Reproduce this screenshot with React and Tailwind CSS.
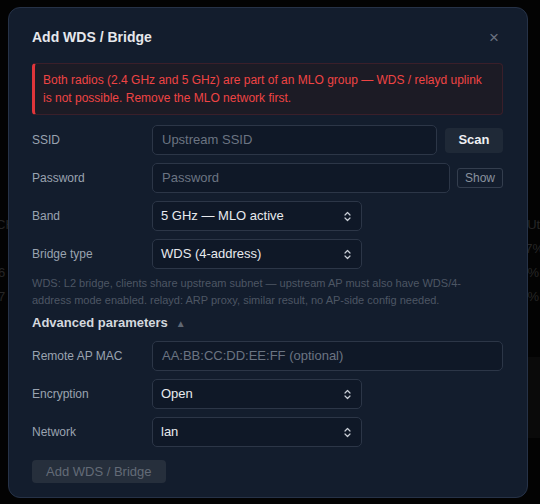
import React from "react";

const font = { fontFamily: '"Liberation Sans", Arial, sans-serif' };

function Chevrons() {
  return (
    <svg width="7" height="11" viewBox="0 0 7 11" fill="none" stroke="#c9ced6" strokeWidth="1.2" strokeLinecap="round" strokeLinejoin="round">
      <path d="M1 4 L3.5 1.5 L6 4" />
      <path d="M1 7 L3.5 9.5 L6 7" />
    </svg>
  );
}

function Label({ children }) {
  return <div className="w-[120px] shrink-0 text-[12px] text-[#9aa3b0]">{children}</div>;
}

function Input({ placeholder, className = "" }) {
  return (
    <div className={"h-[30px] rounded-[5px] border border-[#2c3647] bg-[#0f1827] flex items-center pl-[9px] text-[13px] text-[#6b7482] " + className}>
      {placeholder}
    </div>
  );
}

function Select({ value }) {
  return (
    <div className="w-[210px] h-[30px] rounded-[5px] border border-[#2c3647] bg-[#0f1827] flex items-center justify-between pl-[8px] pr-[10px] text-[13px] text-[#e8eaee]">
      <span>{value}</span>
      <Chevrons />
    </div>
  );
}

function Row({ label, children }) {
  return (
    <div className="flex items-center">
      <Label>{label}</Label>
      <div className="flex-1 flex items-center">{children}</div>
    </div>
  );
}

export default function App() {
  return (
    <div className="relative w-[540px] h-[504px] overflow-hidden bg-[#030303]" style={font}>
      {/* dimmed page behind overlay */}
      <div className="flex flex-col pt-[213px] text-[13px] text-[#262626] leading-[24px]">
        <div className="flex justify-between"><span className="-ml-[4px]">CH</span><span className="mr-[-6px]">Util</span></div>
        <div className="flex justify-between"><span></span><span className="mr-[-4px]">7%</span></div>
        <div className="flex justify-between"><span className="-ml-[2px]">6</span><span className="mr-[1px]">%</span></div>
        <div className="flex justify-between"><span className="-ml-[2px]">7</span><span className="mr-[1px]">%</span></div>
      </div>
      <div className="absolute left-[527px] top-[357px] w-[13px] h-[81px] bg-[#0a0a0a]" />

      {/* modal */}
      <div className="absolute left-[8px] top-[7px] w-[520px] h-[491px] rounded-[12px] border border-[#263247] bg-[#131d2d] pl-[23px] pr-[24px] pt-[19px] pb-[14px] flex flex-col">
        <div className="flex items-center justify-between h-[22px]">
          <div className="text-[14px] font-bold text-[#e6e8ec]">Add WDS / Bridge</div>
          <div className="text-[17px] leading-none text-[#6b7280] mr-[4px]">×</div>
        </div>

        <div className="mt-[15px] rounded-[4px] border border-[#3a1f2a] border-l-[3px] border-l-[#e0353a] bg-[#1c1b25] pl-[8px] pr-[10px] py-[7px] text-[12px] leading-[18px] text-[#ef4444]">
          Both radios (2.4 GHz and 5 GHz) are part of an MLO group — WDS / relayd uplink is not possible. Remove the MLO network first.
        </div>

        <div className="mt-[10px] flex flex-col gap-[8px]">
          <Row label="SSID">
            <Input placeholder="Upstream SSID" className="flex-1" />
            <div className="ml-[8px] w-[58px] h-[25px] rounded-[4px] bg-[#1f2937] flex items-center justify-center text-[13px] font-semibold text-[#eef0f3]">Scan</div>
          </Row>
          <Row label="Password">
            <Input placeholder="Password" className="flex-1" />
            <div className="ml-[7px] w-[46px] h-[20px] rounded-[3px] border border-[#343e4e] flex items-center justify-center text-[12px] text-[#8a929e]">Show</div>
          </Row>
          <Row label="Band">
            <Select value="5 GHz — MLO active" />
          </Row>
          <Row label="Bridge type">
            <Select value="WDS (4-address)" />
          </Row>
        </div>

        <div className="mt-[6px] text-[11px] leading-[17px] text-[#4d5664] pr-[30px]">
          WDS: L2 bridge, clients share upstream subnet — upstream AP must also have WDS/4-address mode enabled. relayd: ARP proxy, similar result, no AP-side config needed.
        </div>

        <div className="mt-[5px] flex items-center h-[18px] text-[13px] font-bold text-[#d4d8de]">
          Advanced parameters
          <span className="ml-[8px] text-[10px] text-[#5f6773] font-normal">▲</span>
        </div>

        <div className="mt-[9px] flex flex-col gap-[8px]">
          <Row label="Remote AP MAC">
            <Input placeholder="AA:BB:CC:DD:EE:FF (optional)" className="flex-1" />
          </Row>
          <Row label="Encryption">
            <Select value="Open" />
          </Row>
          <Row label="Network">
            <Select value="lan" />
          </Row>
        </div>

        <div className="mt-[13px] self-start h-[25px] px-[14px] rounded-[4px] bg-[#262f3c] flex items-center text-[13px] text-[#636b77]">
          Add WDS / Bridge
        </div>
      </div>
    </div>
  );
}
